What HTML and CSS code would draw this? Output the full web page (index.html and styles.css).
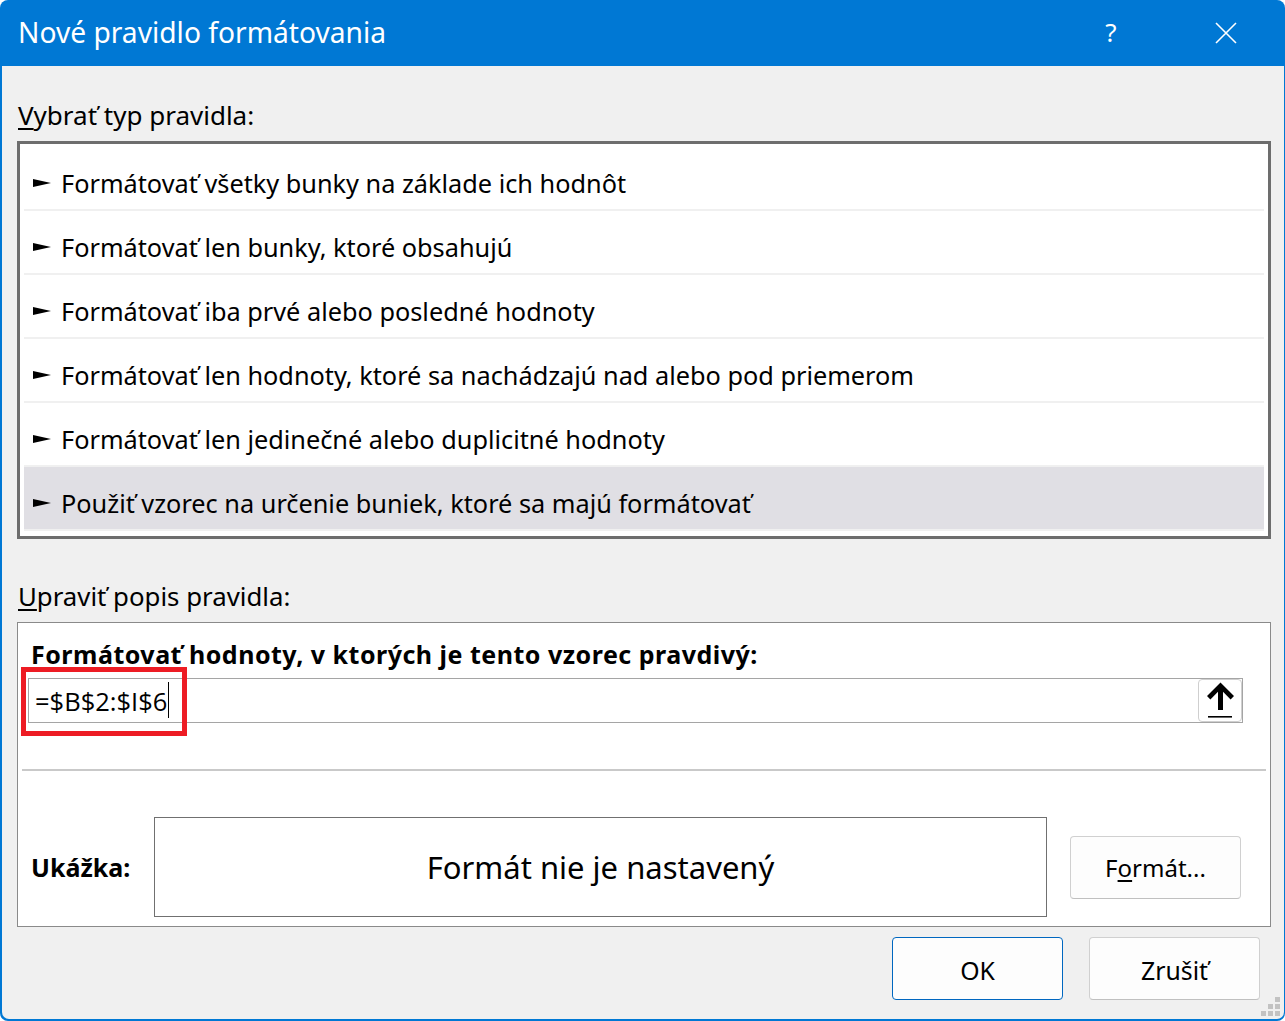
FILE: index.html
```html
<!DOCTYPE html>
<html lang="sk">
<head>
<meta charset="utf-8">
<title>Nové pravidlo formátovania</title>
<link rel="stylesheet" href="styles.css">
</head>
<body>
<div class="window">
  <div class="titlebar">
    <span class="title">Nové pravidlo formátovania</span>
    <span class="help">?</span>
    <span class="close">
      <svg width="22" height="22" viewBox="0 0 22 22"><path d="M1 1 L21 21 M21 1 L1 21" stroke="#fff" stroke-width="1.6" fill="none"/></svg>
    </span>
  </div>
  <div class="body">
    <div class="label label-type"><u>V</u>ybrať typ pravidla:</div>
    <div class="listbox">
      <div class="item"><svg class="arrow" width="18" height="8" viewBox="0 0 18 8"><polygon points="0,0 18,4 0,8"/></svg>Formátovať všetky bunky na základe ich hodnôt</div>
      <div class="item"><svg class="arrow" width="18" height="8" viewBox="0 0 18 8"><polygon points="0,0 18,4 0,8"/></svg>Formátovať len bunky, ktoré obsahujú</div>
      <div class="item"><svg class="arrow" width="18" height="8" viewBox="0 0 18 8"><polygon points="0,0 18,4 0,8"/></svg>Formátovať iba prvé alebo posledné hodnoty</div>
      <div class="item"><svg class="arrow" width="18" height="8" viewBox="0 0 18 8"><polygon points="0,0 18,4 0,8"/></svg>Formátovať len hodnoty, ktoré sa nachádzajú nad alebo pod priemerom</div>
      <div class="item"><svg class="arrow" width="18" height="8" viewBox="0 0 18 8"><polygon points="0,0 18,4 0,8"/></svg>Formátovať len jedinečné alebo duplicitné hodnoty</div>
      <div class="item selected"><svg class="arrow" width="18" height="8" viewBox="0 0 18 8"><polygon points="0,0 18,4 0,8"/></svg>Použiť vzorec na určenie buniek, ktoré sa majú formátovať</div>
    </div>
    <div class="label label-edit"><u>U</u>praviť popis pravidla:</div>
    <div class="group">
      <div class="heading"><u>F</u>ormátovať hodnoty, v ktorých je tento vzorec pravdivý:</div>
      <div class="formula">
        <span class="value">=$B$2:$I$6</span><span class="caret"></span>
        <span class="collapse">
          <svg width="44" height="43" viewBox="0 0 44 43"><path d="M22.5 3.5 L36 17 L32.6 20.4 L25 12.8 L25 31 L20 31 L20 12.8 L12.4 20.4 L9 17 Z" fill="#000"/><rect x="10" y="37" width="24" height="1.6" fill="#000"/></svg>
        </span>
      </div>
      <div class="highlight"></div>
      <div class="separator"></div>
      <div class="preview-row">
        <div class="preview-label">Ukážka:</div>
        <div class="preview">Formát nie je nastavený</div>
        <span class="btn btn-format">F<u>o</u>rmát...</span>
      </div>
    </div>
    <div class="actions">
      <span class="btn btn-ok">OK</span>
      <span class="btn btn-cancel">Zrušiť</span>
    </div>
    <div class="grip">
      <i class="dot d1"></i><i class="dot d2"></i><i class="dot d3"></i>
      <i class="dot d4"></i><i class="dot d5"></i><i class="dot d6"></i>
    </div>
  </div>
</div>
</body>
</html>
```

FILE: styles.css
```css
* { box-sizing: border-box; }
html, body { margin: 0; padding: 0; }
body {
  background: #ffffff;
  font-family: "Noto Sans", "Open Sans", sans-serif;
  color: #000;
}
.window {
  width: 1285px;
  height: 1021px;
  background: #0078d4;
  border-radius: 8px;
  display: flex;
  flex-direction: column;
  overflow: hidden;
}
.titlebar {
  height: 66px;
  flex: none;
  display: flex;
  align-items: center;
  color: #fff;
  padding-right: 36px;
}
.title {
  flex: 1;
  padding-left: 18px;
  font-size: 28.2px;
  line-height: 36px;
  margin-top: -2px;
}
.help {
  width: 46px;
  text-align: center;
  font-size: 26px;
  line-height: 34px;
  margin-top: -2px;
}
.close {
  width: 46px;
  margin-left: 69px;
  display: flex;
  justify-content: center;
}
.close svg { display: block; }

.body {
  position: relative;
  flex: 1;
  margin: 0 1px 2px 2px;
  background: #f0f0f0;
  border-radius: 0 0 7px 7px;
  padding: 32px 13px 0 15px;
}
.label {
  font-size: 26px;
  line-height: 34px;
  padding-left: 1px;
}
.label u, .heading u, .btn u {
  text-decoration-thickness: 1.5px;
  text-underline-offset: 3px;
}
.listbox {
  margin-top: 9px;
  height: 398px;
  background: #fff;
  border: 3px solid #6d6d6d;
  padding: 3px 4px 5px 4px;
}
.item {
  height: 64px;
  border-bottom: 2px solid #f0f0f0;
  display: flex;
  align-items: center;
  padding: 10px 0 0 9px;
  font-size: 25.3px;
  line-height: 52px;
  white-space: nowrap;
}
.item.selected { background: #e0dfe4; }
.arrow { flex: none; margin-right: 10px; fill: #000; }

.label-edit { margin-top: 40px; font-size: 25.8px; }

.group {
  position: relative;
  margin-top: 9px;
  height: 305px;
  background: #fff;
  border: 1px solid #8a8a8a;
  padding: 16px 0 9px 0;
}
.heading {
  font-size: 25px;
  font-weight: 700;
  letter-spacing: 0.5px;
  line-height: 30px;
  padding-left: 13px;
  white-space: nowrap;
}
.formula {
  margin: 9px 27px 0 10px;
  height: 45px;
  border: 1px solid #a5a5a5;
  display: flex;
  align-items: flex-start;
  padding-left: 6px;
  font-size: 25.5px;
  line-height: 41px;
}
.value { padding-top: 2px; font-family: "Open Sans", "Noto Sans", sans-serif; }
.caret {
  width: 1px;
  height: 36px;
  background: #000;
  margin: 3px 0 0 1px;
}
.collapse {
  margin-left: auto;
  width: 44px;
  height: 43px;
  border: 1px solid #cfcfcf;
  border-radius: 4px;
  background: #fff;
}
.collapse svg { display: block; margin: -1px; }
.highlight {
  position: absolute;
  left: 3px;
  top: 44px;
  width: 166px;
  height: 69px;
  border: 5px solid #ed1c24;
}
.separator {
  margin: 46px 4px 0 4px;
  height: 2px;
  background: #c9c9c9;
}
.preview-row {
  margin-top: 46px;
  display: flex;
  align-items: center;
  height: 100px;
}
.preview-label {
  width: 136px;
  padding-left: 13px;
  font-size: 25px;
  font-weight: 700;
}
.preview {
  width: 893px;
  height: 100px;
  border: 1px solid #707070;
  display: flex;
  align-items: center;
  justify-content: center;
  font-size: 31px;
}
.btn {
  display: flex;
  align-items: center;
  justify-content: center;
  background: #fdfdfd;
  border: 1px solid #d0d0d0;
  border-bottom-color: #c0c0c0;
  border-radius: 4px;
  font-size: 24px;
}
.btn-format {
  margin-left: 23px;
  width: 171px;
  height: 63px;
}
.actions {
  margin-top: 10px;
  display: flex;
  justify-content: flex-end;
  gap: 26px;
  padding-right: 11px;
}
.btn-ok, .btn-cancel {
  width: 171px;
  height: 63px;
  padding-top: 3px;
  font-size: 24.8px;
}
.btn-ok { border-color: #0067c0; }

.grip {
  position: absolute;
  right: 4px;
  bottom: 3px;
  width: 19px;
  height: 19px;
}
.dot {
  position: absolute;
  width: 5px;
  height: 5px;
  background: #c2c2c2;
}
.d1 { right: 0; top: 0; }
.d2 { right: 7px; top: 7px; }
.d3 { right: 0; top: 7px; }
.d4 { right: 14px; top: 14px; }
.d5 { right: 7px; top: 14px; }
.d6 { right: 0; top: 14px; }
```
